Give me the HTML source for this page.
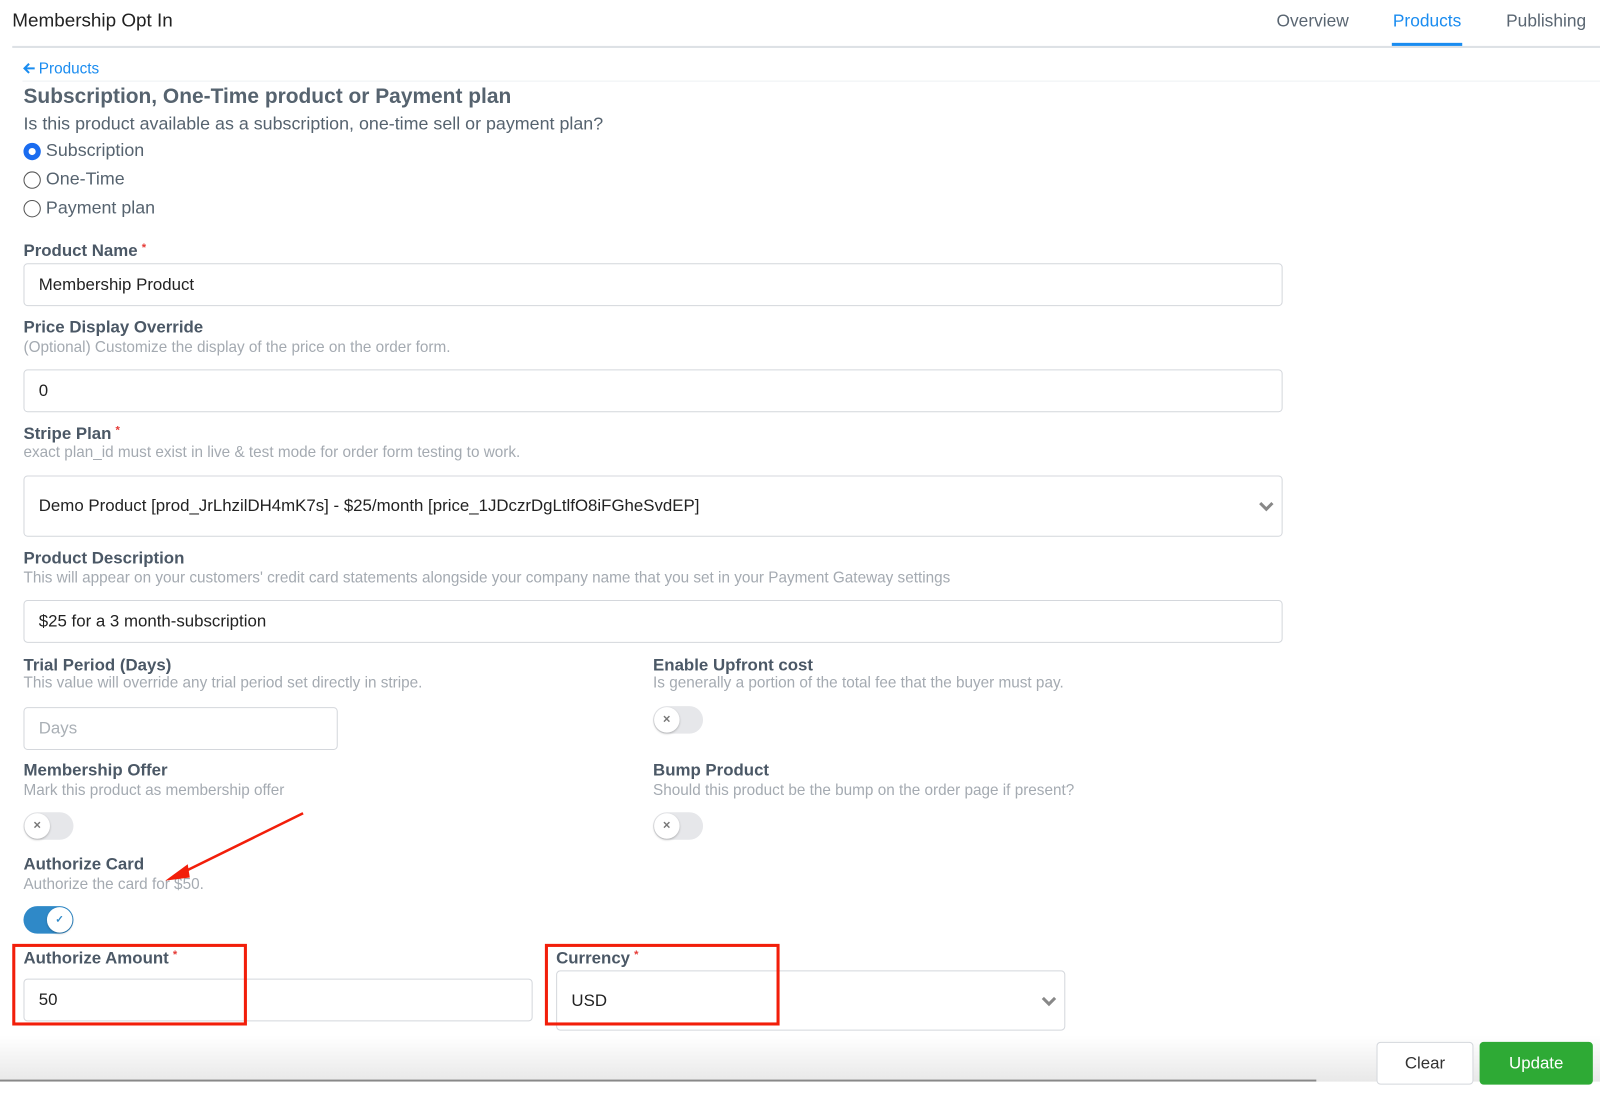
<!DOCTYPE html>
<html><head><meta charset="utf-8"><style>
*{box-sizing:border-box;margin:0;padding:0}
body{width:1600px;height:1082px;position:relative;overflow:hidden;background:#fff;font-family:"Liberation Sans",sans-serif;color:#4a5562}
#w{position:absolute;left:0;top:0;width:1568px;height:1061px;transform:scale(1.0204);transform-origin:0 0}
.a{position:absolute;white-space:nowrap}
.lbl{font-size:16.5px;font-weight:bold;color:#4b5866}
.help{font-size:15px;color:#a4aab1}
.req{color:#e53935;font-size:11px;vertical-align:top;margin-left:4px}
.inp{position:absolute;border:1.5px solid #d4d7dc;border-radius:4px;background:#fff;font-size:16.5px;color:#222;padding-left:14px;display:flex;align-items:center}
.tog{position:absolute;width:49px;height:27px;border-radius:14px;background:#e6e7ea}
.tog i{position:absolute;left:1px;top:1px;width:25px;height:25px;border-radius:50%;background:#fff;box-shadow:0 1px 2px rgba(0,0,0,.25);font-style:normal;font-size:10px;color:#777;text-align:center;line-height:25px;font-weight:bold}
.radio{position:absolute;width:17px;height:17px;border-radius:50%;border:1.5px solid #555}
.red{position:absolute;border:3px solid #f21e0a}
.chev{position:absolute}
</style></head><body><div id="w">
<div class="a" style="left:12px;top:9px;font-size:18.5px;color:#222">Membership Opt In</div>
<div class="a" style="left:1251px;top:11px;font-size:17px;color:#5a6672">Overview</div>
<div class="a" style="left:1365px;top:11px;font-size:17px;color:#1a8cf0">Products</div>
<div class="a" style="left:1476px;top:11px;font-size:17px;color:#5a6672">Publishing</div>
<div class="a" style="left:12px;top:45px;width:1556px;height:2px;background:#dde1e5"></div>
<div class="a" style="left:1364px;top:42px;width:69px;height:3px;background:#1a8cf0"></div>
<div class="a" style="left:22px;top:59px;font-size:15px;color:#1a8cf0"><svg width="13" height="12" viewBox="0 0 13 12" style="vertical-align:-1px;margin-right:3px"><path d="M12 6H2M6.5 1.5L2 6l4.5 4.5" stroke="#1a8cf0" stroke-width="2" fill="none"/></svg>Products</div>
<div class="a" style="left:22px;top:79px;width:1546px;height:1px;background:#eef1f4"></div>
<div class="a" style="left:23px;top:83px;font-size:20.5px;font-weight:bold;color:#56636f">Subscription, One-Time product or Payment plan</div>
<div class="a" style="left:23px;top:111px;font-size:17.5px;color:#56636f">Is this product available as a subscription, one-time sell or payment plan?</div>
<div class="radio" style="left:23px;top:140px;border:5px solid #1a6cf0"></div>
<div class="a" style="left:45px;top:137px;font-size:17.5px;color:#56636f">Subscription</div>
<div class="radio" style="left:23px;top:168px"></div>
<div class="a" style="left:45px;top:165px;font-size:17.5px;color:#56636f">One-Time</div>
<div class="radio" style="left:23px;top:196px"></div>
<div class="a" style="left:45px;top:193px;font-size:17.5px;color:#56636f">Payment plan</div>

<div class="a lbl" style="left:23px;top:237px">Product Name<span class="req">*</span></div>
<div class="inp" style="left:23px;top:258px;width:1234px;height:42px">Membership Product</div>

<div class="a lbl" style="left:23px;top:312px">Price Display Override</div>
<div class="a help" style="left:23px;top:332px">(Optional) Customize the display of the price on the order form.</div>
<div class="inp" style="left:23px;top:362px;width:1234px;height:42px">0</div>

<div class="a lbl" style="left:23px;top:416px">Stripe Plan<span class="req">*</span></div>
<div class="a help" style="left:23px;top:435px">exact plan_id must exist in live &amp; test mode for order form testing to work.</div>
<div class="inp" style="left:23px;top:466px;width:1234px;height:60px">Demo Product [prod_JrLhzilDH4mK7s] - $25/month [price_1JDczrDgLtlfO8iFGheSvdEP]</div>
<svg class="chev" style="left:1233px;top:491px" width="16" height="12" viewBox="0 0 16 12"><path d="M2 2l6 6 6-6" stroke="#888" stroke-width="3" fill="none"/></svg>

<div class="a lbl" style="left:23px;top:538px">Product Description</div>
<div class="a help" style="left:23px;top:558px">This will appear on your customers' credit card statements alongside your company name that you set in your Payment Gateway settings</div>
<div class="inp" style="left:23px;top:588px;width:1234px;height:42px">$25 for a 3 month-subscription</div>

<div class="a lbl" style="left:23px;top:643px">Trial Period (Days)</div>
<div class="a help" style="left:23px;top:661px">This value will override any trial period set directly in stripe.</div>
<div class="inp" style="left:23px;top:693px;width:308px;height:42px;color:#aab0b6">Days</div>

<div class="a lbl" style="left:640px;top:643px">Enable Upfront cost</div>
<div class="a help" style="left:640px;top:661px">Is generally a portion of the total fee that the buyer must pay.</div>
<div class="tog" style="left:640px;top:692px"><i>✕</i></div>

<div class="a lbl" style="left:23px;top:746px">Membership Offer</div>
<div class="a help" style="left:23px;top:766px">Mark this product as membership offer</div>
<div class="tog" style="left:23px;top:796px"><i>✕</i></div>

<div class="a lbl" style="left:640px;top:746px">Bump Product</div>
<div class="a help" style="left:640px;top:766px">Should this product be the bump on the order page if present?</div>
<div class="tog" style="left:640px;top:796px"><i>✕</i></div>

<div class="a lbl" style="left:23px;top:838px">Authorize Card</div>
<div class="a help" style="left:23px;top:858px">Authorize the card for $50.</div>
<div class="tog" style="left:23px;top:888px;background:#2f89c8"><i style="left:23px;color:#2f89c8">✓</i></div>

<div class="a lbl" style="left:23px;top:930px">Authorize Amount<span class="req">*</span></div>
<div class="inp" style="left:23px;top:959px;width:499px;height:42px">50</div>

<div class="a lbl" style="left:545px;top:930px">Currency<span class="req">*</span></div>
<div class="inp" style="left:545px;top:951px;width:499px;height:59px;padding-top:2px">USD</div>
<svg class="chev" style="left:1020px;top:976px" width="16" height="12" viewBox="0 0 16 12"><path d="M2 2l6 6 6-6" stroke="#888" stroke-width="3" fill="none"/></svg>

<svg class="a" style="left:0;top:0" width="1600" height="1082"><path d="M297 797L175 857" stroke="#f21e0a" stroke-width="2.5"/><path d="M162 863l22-16 2 13z" fill="#f21e0a"/></svg>
<div class="red" style="left:12px;top:925px;width:230px;height:80px"></div>
<div class="red" style="left:534px;top:925px;width:230px;height:80px"></div>

<div class="a" style="left:0;top:1015px;width:1600px;height:67px;background:linear-gradient(#fff,#e2e2e2 85%)"></div>
<div class="a" style="left:0;top:1058px;width:1290px;height:2px;background:#888"></div>
<div class="a" style="left:0;top:1060px;width:1600px;height:22px;background:#fff"></div>
<div class="a" style="left:1349px;top:1021px;width:95px;height:42px;border:1.5px solid #d4d7dc;border-radius:4px;background:#fff;font-size:16.5px;color:#333;text-align:center;line-height:40px">Clear</div>
<div class="a" style="left:1450px;top:1021px;width:111px;height:42px;border-radius:4px;background:#2eaa35;font-size:16.5px;color:#fff;text-align:center;line-height:42px">Update</div>
</div></body></html>
